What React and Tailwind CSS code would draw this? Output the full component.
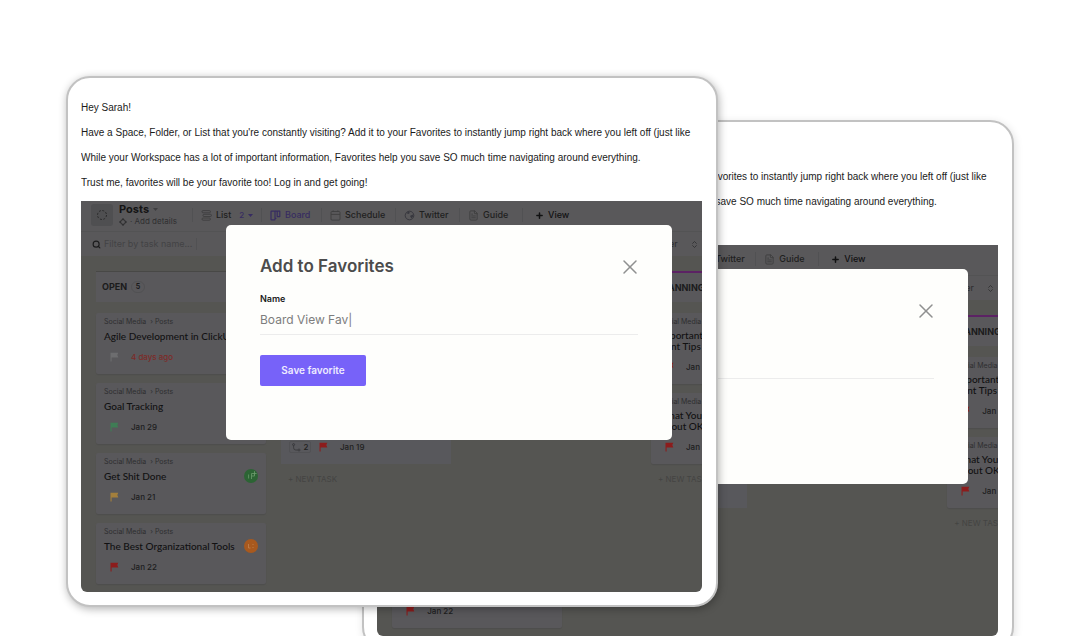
import React, { useId } from "react";
import { Search, X, Plus, Calendar, FileText, Globe, ChevronsUpDown } from "lucide-react";
import clsx from "clsx";

const OPEN_TASKS = [
  { title: ["Agile Development in ClickUp"], date: "4 days ago", flag: "#6d6d6f", late: true },
  { title: ["Goal Tracking"], date: "Jan 29", flag: "#3f7d55" },
  { title: ["Get Shit Done"], date: "Jan 21", flag: "#a37f3c", avatar: "green" },
  { title: ["The Best Organizational Tools"], date: "Jan 22", flag: "#8c1c1c", avatar: "orange" },
];

const PLANNING_TASKS = [
  { title: ["Important", "Print Tips"], date: "Jan 20", flag: "#8c1c1c" },
  { title: ["What You", "About OKRs"], date: "Jan 25", flag: "#8c1c1c" },
];

function FlagIcon({ color }) {
  return (
    <svg className="h-[10px] w-[9px] shrink-0" viewBox="0 0 9 10" aria-hidden="true">
      <path d="M0.5 0.8h7.8l-1 2.3 1 2.5H1.6V9.5H0.5z" fill={color} />
    </svg>
  );
}

function ListIcon() {
  return (
    <svg className="h-[11px] w-[11px]" viewBox="0 0 11 11" fill="none" stroke="#3e3e40" strokeWidth="0.9" aria-hidden="true">
      <rect x="1" y="0.6" width="8.4" height="2.2" rx="1" />
      <rect x="2" y="4.3" width="8.4" height="2.2" rx="1" />
      <rect x="1" y="8" width="8.4" height="2.2" rx="1" />
    </svg>
  );
}

function BoardIcon() {
  return (
    <svg className="h-[11px] w-[11px]" viewBox="0 0 11 11" fill="none" stroke="#372c61" strokeWidth="1.2" strokeLinejoin="round" aria-hidden="true">
      <rect x="1" y="1.2" width="4" height="8.6" rx="0.6" />
      <path d="M5 1.2h4.8v5.4H7.2V1.2M5 8.4h1.4" />
    </svg>
  );
}

function Caret({ color }) {
  return (
    <svg className="h-[3px] w-[5px]" viewBox="0 0 5 3" aria-hidden="true">
      <path d="M0 0h5L2.5 3z" fill={color} />
    </svg>
  );
}

function Avatar({ tone }) {
  return (
    <svg className="ml-auto h-[14px] w-[14px] shrink-0" viewBox="0 0 14 14" aria-hidden="true">
      <circle cx="7" cy="7" r="7" fill={tone === "green" ? "#2c6434" : "#a8591e"} />
      {tone === "green" ? (
        <path d="M4.6 5.5v4M7.5 10V4.5h3v2.5h-3M10.5 2.2v3.3M12.6 4.5h-3" stroke="#6c9a6d" strokeWidth="0.8" fill="none" />
      ) : (
        <path d="M4.5 5v4h2M9 5v1M9 8v1" stroke="#c78a58" strokeWidth="0.7" fill="none" />
      )}
    </svg>
  );
}

function Tab({ icon, label, className, children }) {
  return (
    <button type="button" className={clsx("flex h-[14px] shrink-0 items-center gap-1 border-l border-[#515153] pl-2 text-[9px] font-medium", className)}>
      {icon}
      <span>{label}</span>
      {children}
    </button>
  );
}

function TaskCard({ task }) {
  return (
    <article className="rounded-[2px] bg-[#59585b] pt-1 pr-2 pb-[10px] pl-2 shadow-[0_1px_1px_#4e4e4d]">
      <div className="h-[10px] text-[7px] leading-[10px] whitespace-nowrap text-[#2e2e30]">Social Media &nbsp;&rsaquo; Posts</div>
      <div className="mt-[2px] flex min-h-[14px] items-center">
        <h4 className="py-px font-[Lato,sans-serif] text-[10px] leading-[11px] font-medium whitespace-nowrap text-[#111112]">
          {task.title.map((line) => (
            <span key={line} className="block">{line}</span>
          ))}
        </h4>
        {task.avatar && <Avatar tone={task.avatar} />}
      </div>
      <div className="mt-[7px] flex h-[14px] items-center pl-[6px] text-[8px] font-medium">
        <FlagIcon color={task.flag} />
        <span className={clsx("ml-3 whitespace-nowrap", task.late ? "text-[#7d2b28]" : "text-[#1d1d1e]")}>{task.date}</span>
      </div>
    </article>
  );
}

function Column({ name, count, accent, children }) {
  return (
    <section className="flex w-[170px] shrink-0 flex-col gap-[9px]">
      <header className={clsx("mb-[2px] flex h-[31px] items-center gap-1 bg-[#59585b] pl-[6px] text-[9px] font-bold text-[#1b1b1c]", accent)}>
        {name}
        {count && <span className="flex h-3 w-[14px] items-center justify-center rounded-full border border-[#515153] text-[7px]">{count}</span>}
      </header>
      {children}
    </section>
  );
}

function FavoriteDialog() {
  const id = useId();
  return (
    <div role="dialog" aria-labelledby={`${id}-title`} className="absolute top-6 right-[30px] left-[145px] h-[215px] rounded-[5px] bg-[#fefefc] px-[34px] pt-[30px]">
      <div className="flex h-6 items-center justify-between">
        <h3 id={`${id}-title`} className="text-[17px] font-semibold text-[#4c4c4c]">Add to Favorites</h3>
        <button type="button" aria-label="Close" className="text-[#8f9090]">
          <X className="-mr-1 h-6 w-6" strokeWidth={1.5} />
        </button>
      </div>
      <label htmlFor={`${id}-name`} className="mt-[14px] block text-[9px] leading-[12px] font-semibold text-[#1c1c1c]">Name</label>
      <div className="mt-1 flex h-[26px] items-start border-b border-[#ececec]">
        <input id={`${id}-name`} type="text" defaultValue="Board View Fav|" className="h-5 w-full bg-transparent text-[12px] text-[#7d7d7d] outline-none" />
      </div>
      <button type="button" className="mt-5 h-[31px] w-[106px] rounded-[2px] bg-[#7762f9] text-[10px] font-semibold text-[#eeebff]">Save favorite</button>
    </div>
  );
}

function BoardPreview() {
  return (
    <div className="relative overflow-hidden rounded-b-md bg-[#555552] font-[Inter,sans-serif] text-[#1f1f20]">
      {/* view tabs */}
      <div className="flex h-[30px] items-center bg-[#59585a] pb-[2px]">
        <div className="flex w-[111px] shrink-0 items-center gap-[6px] pl-[10px]">
          <div className="flex h-[22px] w-[22px] shrink-0 items-center justify-center rounded-[3px] bg-[#4f4f51]">
            <svg className="h-3 w-3" viewBox="0 0 12 12" aria-hidden="true">
              <circle cx="6" cy="6" r="4.5" fill="none" stroke="#2b2b2c" strokeDasharray="2 1.5" />
            </svg>
          </div>
          <div className="whitespace-nowrap">
            <div className="flex items-center gap-1 text-[11px] leading-[13px] font-bold text-[#141415]">
              Posts <Caret color="#3e3e40" />
            </div>
            <div className="flex items-center gap-[3px] text-[8px] leading-[11px] text-[#2f2f31]">
              <svg className="h-2 w-2" viewBox="0 0 8 8" fill="none" stroke="#2b2b2c" aria-hidden="true">
                <circle cx="4" cy="4" r="2.4" />
                <path d="M4 0v2M4 6v2M0 4h2M6 4h2" />
              </svg>
              <span>&middot; Add details</span>
            </div>
          </div>
        </div>
        <Tab className="w-[69px]" icon={<ListIcon />} label="List">
          <span className="ml-1 text-[8px] text-[#372c61]">2</span>
          <Caret color="#372c61" />
        </Tab>
        <Tab className="w-[60px] text-[#372c61]" icon={<BoardIcon />} label="Board" />
        <Tab
          className="w-[74px]"
          icon={
            <svg className="h-[11px] w-[11px]" viewBox="0 0 11 11" fill="none" stroke="#3e3e40" strokeWidth="0.9" aria-hidden="true">
              <rect x="1" y="1.5" width="9" height="8.6" rx="1" />
              <path d="M1 4.4h9M3.2 0.4v1.4M7.8 0.4v1.4" />
            </svg>
          }
          label="Schedule"
        />
        <Tab
          className="w-[64px]"
          icon={
            <svg className="h-[11px] w-[11px]" viewBox="0 0 11 11" fill="none" stroke="#38383f" aria-hidden="true">
              <circle cx="5.5" cy="5.5" r="4.3" />
              <path d="M2.2 3l2.2 1 1.4-1L5.2 1.4zM6 6l2.6-1.4L9.6 6 7.4 8.6z" fill="#38383f" stroke="none" />
            </svg>
          }
          label="Twitter"
        />
        <Tab className="w-[63px]" icon={<FileText className="h-[11px] w-[11px] text-[#3e3e40]" />} label="Guide" />
        <Tab className="pl-3 font-bold text-[#111112]" icon={<Plus className="h-[9px] w-[9px]" strokeWidth={4} />} label="View" />
      </div>

      {/* filter bar */}
      <div className="flex h-[25px] items-center border-t border-[#535354] bg-[#59585a] pr-[3px] pl-[11px] text-[9px]">
        <Search className="h-[9px] w-[9px] shrink-0 text-[#1b1b1c]" strokeWidth={3} />
        <input type="text" aria-label="Filter by task name" placeholder="Filter by task name..." className="ml-[3px] h-3 w-[93px] border-r border-[#515153] bg-transparent outline-none placeholder:text-[#434345]" />
        <button type="button" className="ml-auto text-[9px] text-[#2b2b2d]">Filter</button>
        <ChevronsUpDown className="ml-3 h-[9px] w-[9px] text-[#2b2b2c]" />
      </div>

      {/* columns */}
      <div className="flex gap-[15px] pt-[15px] pb-2 pl-[15px]">
        <Column name="OPEN" count="5" accent="border-t border-[#484846]">
          {OPEN_TASKS.map((task) => (
            <TaskCard key={task.title[0]} task={task} />
          ))}
        </Column>
        <Column accent="border-t border-[#484846]">
          <div className="h-[71px] bg-[#59585b]" />
          <div className="flex h-[71px] items-end bg-[#58585c] pb-[10px] pl-2 text-[8px] font-medium">
            <div className="flex h-[14px] items-center">
              <span className="flex h-3 w-[22px] items-center justify-center gap-[3px] rounded-[2px] border border-[#515154]">
                <svg className="h-[9px] w-[9px]" viewBox="0 0 9 9" fill="none" stroke="#38383a" strokeWidth="0.9" aria-hidden="true">
                  <circle cx="1.6" cy="1.6" r="1" />
                  <path d="M1.6 2.6v2.2q0 2.2 2.2 2.2h2" />
                  <circle cx="7" cy="7" r="1" />
                </svg>
                2
              </span>
              <span className="ml-2 flex"><FlagIcon color="#8c1c1c" /></span>
              <span className="ml-3">Jan 19</span>
            </div>
          </div>
          <div className="pl-[7px] text-[8px] leading-[12px] text-[#444442]">+ NEW TASK</div>
        </Column>
        <Column accent="border-t border-[#484846]" />
        <Column name="PLANNING" accent="border-t-2 border-[#5c2264]">
          {PLANNING_TASKS.map((task) => (
            <TaskCard key={task.title[0]} task={task} />
          ))}
          <div className="pl-[7px] text-[8px] leading-[12px] text-[#444442]">+ NEW TASK</div>
        </Column>
      </div>

      <FavoriteDialog />
    </div>
  );
}

function EmailCard({ className }) {
  return (
    <section className={clsx("row-start-1 min-w-0 self-start rounded-3xl border-2 border-[#c2c2c2] bg-white pt-[17px] pr-[14px] pb-[13px] pl-[13px]", className)}>
      <div className="mb-[6px] overflow-hidden font-['Liberation_Sans',Arial,sans-serif] text-[10px] leading-[25px] whitespace-nowrap text-[#1a1a1a]">
        <p>Hey Sarah!</p>
        <p>Have a Space, Folder, or List that you're constantly visiting? Add it to your Favorites to instantly jump right back where you left off (just like</p>
        <p>While your Workspace has a lot of important information, Favorites help you save SO much time navigating around everything.</p>
        <p>Trust me, favorites will be your favorite too! Log in and get going!</p>
      </div>
      <BoardPreview />
    </section>
  );
}

export default function App() {
  return (
    <main className="h-screen overflow-hidden bg-white px-[66px] pt-[76px]">
      <div className="grid grid-cols-[5fr_6fr_5fr]">
        <EmailCard className="col-start-2 col-end-4 mt-11 shadow-[1px_2px_8px_rgba(0,0,0,0.12)]" />
        <EmailCard className="z-10 col-start-1 col-end-3 shadow-[1px_2px_8px_rgba(0,0,0,0.3)]" />
      </div>
    </main>
  );
}
